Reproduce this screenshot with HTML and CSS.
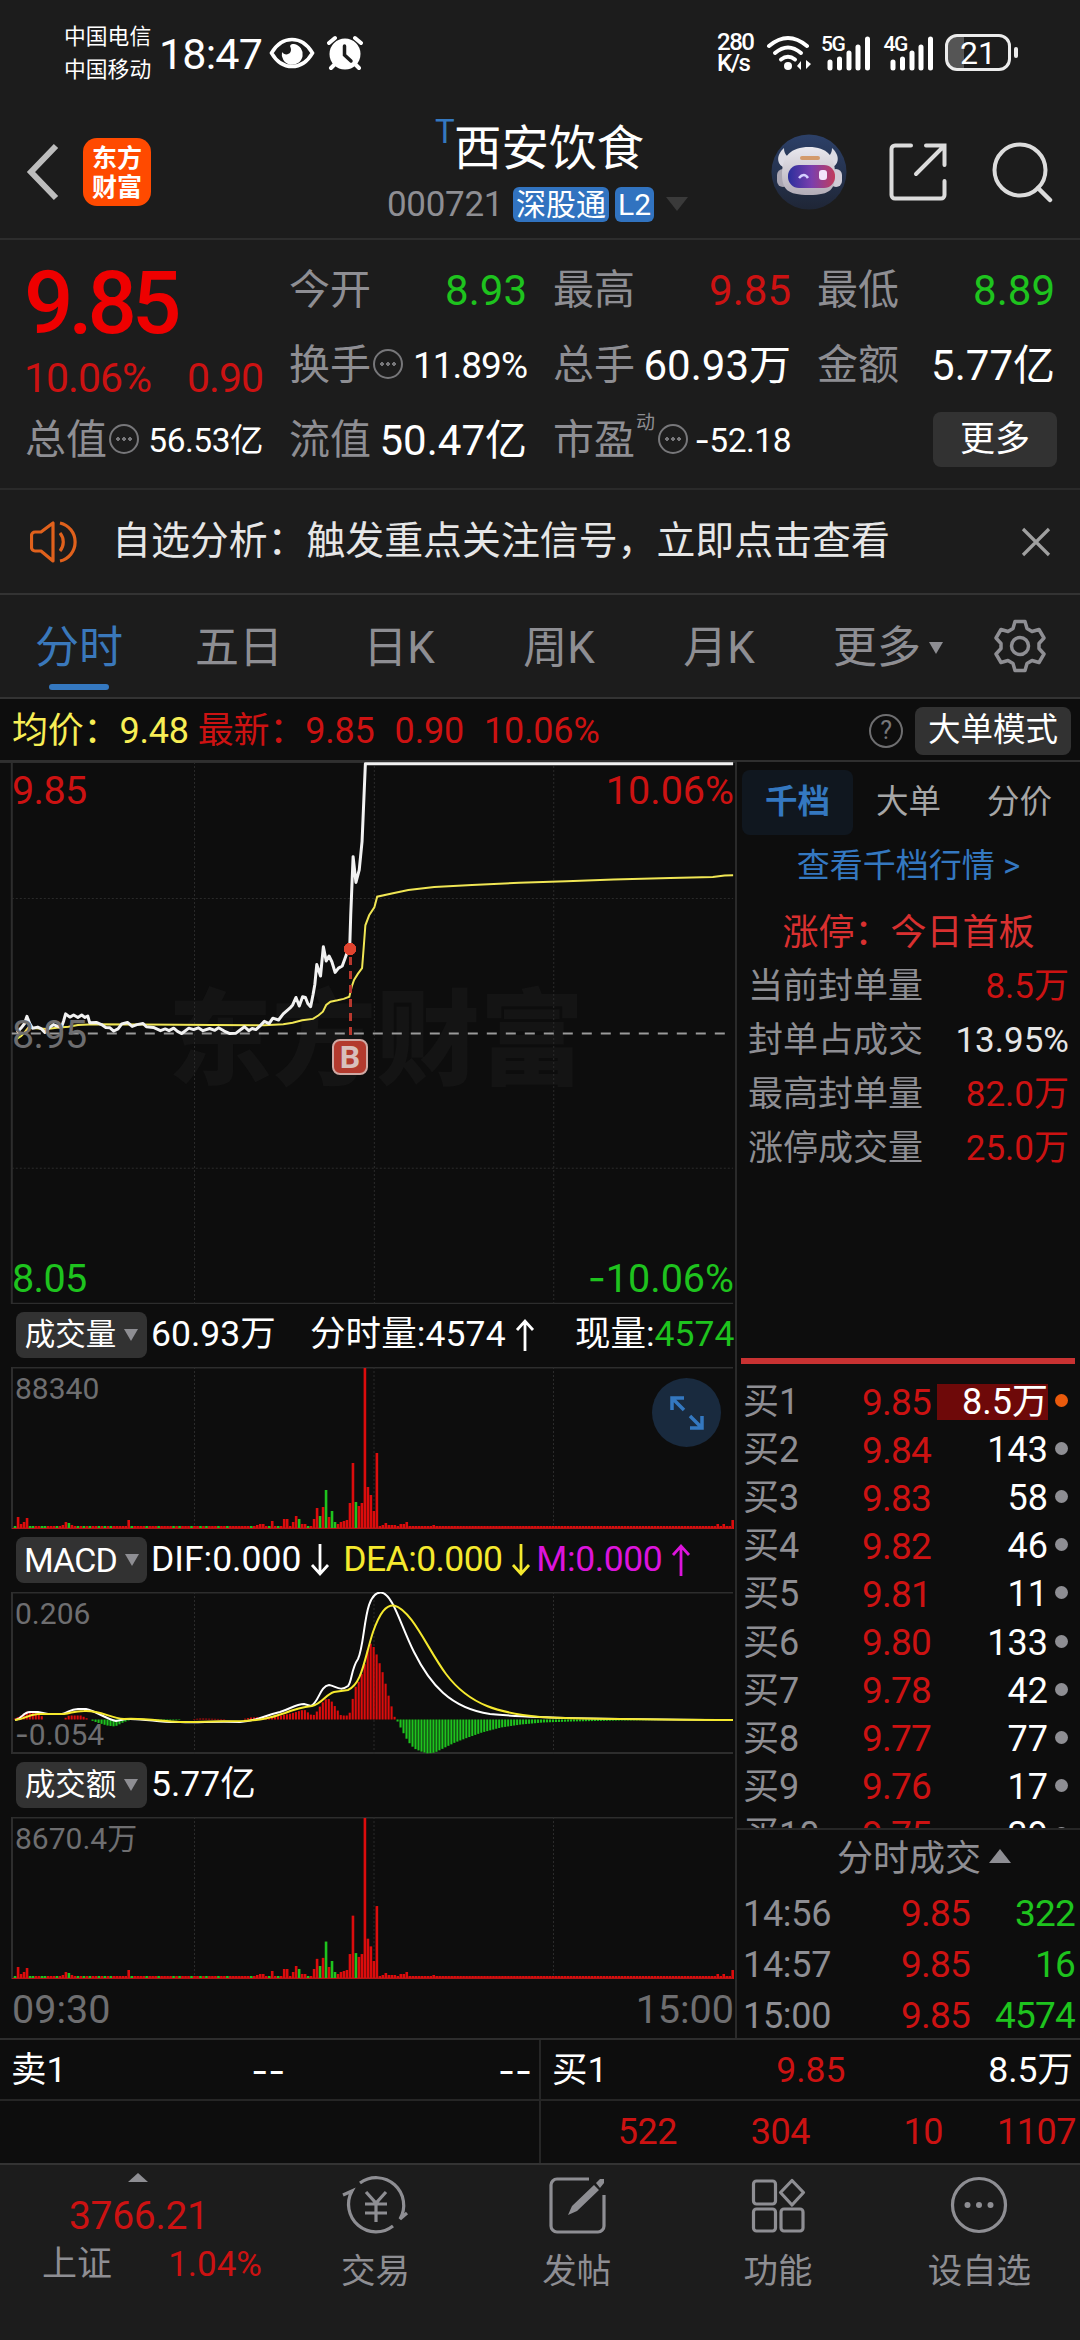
FILE: index.html
```html
<!DOCTYPE html>
<html lang="zh-CN">
<head>
  <meta charset="UTF-8" />
  <title>西安饮食 000721</title>
  <link rel="stylesheet" href="styles.css">
</head>
<body>
  <div class="statusbar">
    <div class="carrier"><span>中国电信</span><span>中国移动</span></div>
    <span class="clock">18:47</span>
    <svg class="ic-eye" width="46" height="34" viewBox="0 0 46 34"><path d="M2.500 17C13-1 33-1 43.500 17C33 35 13 35 2.500 17z" fill="none" stroke="#fff" stroke-width="3.500"/><path d="M25 8a10.500 10.500 0 1 1-12 8c3 5 12 2 8-6c1-2 2-2 4-2z" fill="#fff"/></svg>
    <svg class="ic-alarm" width="36" height="36" viewBox="0 0 36 36"><circle cx="18" cy="19" r="15.500" fill="#fff"/><path d="M2 8l6-5M34 8l-6-5M8 29l-4 4M28 29l4 4" stroke="#fff" stroke-width="4" stroke-linecap="round"/><path d="M17.500 11v9l6.500 6" fill="none" stroke="#1c1c1c" stroke-width="3.500" stroke-linecap="round"/></svg>
    <div class="status-right">
      <div class="speed"><span>280</span><span>K/s</span></div>
      <svg class="ic-wifi" width="46" height="36" viewBox="0 0 46 36"><g fill="none" stroke="#fff" stroke-width="4" stroke-linecap="round"><path d="M3 11Q22-5 41 11"/><path d="M9 18Q22 7 35 18"/><path d="M15 24.500Q22 19 29 24.500"/></g><circle cx="22" cy="31" r="4" fill="#fff"/><path d="M31 31l4-5v9zM45 29l-5-4v9z" fill="#fff"/></svg>
      <div class="signal"><span>5G</span><svg width="52" height="36" viewBox="0 0 52 36"><path d="M9 27v6M18.500 24v9M28 18v15M37 12v21M46.500 4v29" stroke="#fff" stroke-width="5" stroke-linecap="round"/></svg></div>
      <div class="signal"><span>4G</span><svg width="52" height="36" viewBox="0 0 52 36"><path d="M9 27v6M18.500 24v9M28 18v15M37 12v21M46.500 4v29" stroke="#fff" stroke-width="5" stroke-linecap="round"/></svg></div>
      <div class="battery">21</div>
    </div>
  </div>

  <header class="topbar">
    <svg class="back" width="34" height="58" viewBox="0 0 34 58"><path d="M30 3L5 29l25 26" fill="none" stroke="#bdbdbd" stroke-width="6"/></svg>
    <div class="logo">东方<br>财富</div>
    <div class="title">
      <div class="name"><sup>T</sup>西安饮食</div>
      <div class="code"><span>000721</span><b>深股通</b><b>L2</b><i class="tri tri-dark"></i></div>
    </div>
    <svg class="robot" width="76" height="76" viewBox="0 0 76 76">
      <defs>
        <linearGradient id="sky" x1="0" y1="0" x2="0" y2="1"><stop offset="0" stop-color="#2c4068"/><stop offset="1" stop-color="#1f2636"/></linearGradient>
        <linearGradient id="visor"><stop offset="0" stop-color="#2b2f9c"/><stop offset=".5" stop-color="#7a3fae"/><stop offset="1" stop-color="#c23d5c"/></linearGradient>
        <linearGradient id="shell" x1="0" y1="0" x2="0" y2="1"><stop offset="0" stop-color="#e9e8ee"/><stop offset="1" stop-color="#b3adb8"/></linearGradient>
      </defs>
      <circle cx="38" cy="38" r="37.500" fill="url(#sky)"/>
      <path d="M13 14c-9 8-7 18 2 20l8-11c-6 1-10-2-10-9zM61 14c9 8 7 18-2 20l-8-11c6 1 10-2 10-9z" fill="#dcdbe4"/>
      <rect x="6" y="35" width="12" height="18" rx="6" fill="#aaa6b2"/><rect x="59" y="35" width="12" height="18" rx="6" fill="#d0ccd6"/>
      <path d="M38 13c18 0 26 9 26 27c0 15-4 21-26 21s-27-6-27-21c0-18 9-27 27-27z" fill="url(#shell)"/>
      <rect x="29" y="22" width="20" height="4" rx="2" fill="#d39a6b"/>
      <rect x="17" y="31" width="47" height="23" rx="11" fill="url(#visor)"/>
      <path d="M28 44q5-6 9 0" fill="none" stroke="#d5d0ff" stroke-width="2.500"/><rect x="48" y="36" width="8" height="10" rx="3" fill="#f3e5fb"/>
    </svg>
    <svg class="share" width="58" height="58" viewBox="0 0 58 58"><path d="M22 2.500H6a3.500 3.500 0 0 0-3.500 3.500v46A3.500 3.500 0 0 0 6 55.500h46a3.500 3.500 0 0 0 3.500-3.500V38M37 2.500h18.500V22M55 3L27 31" fill="none" stroke="#dcdcdc" stroke-width="4" stroke-linecap="round"/></svg>
    <svg class="search" width="62" height="62" viewBox="0 0 62 62"><circle cx="28" cy="29" r="25.500" fill="none" stroke="#dcdcdc" stroke-width="4"/><path d="M46 47l12 12" stroke="#dcdcdc" stroke-width="4.500" stroke-linecap="round"/></svg>
  </header>

  <section class="quote">
    <div class="price">
      <div class="last">9.85</div>
      <div class="chg"><span>10.06%</span><span>0.90</span></div>
    </div>
    <div class="cell"><span>今开</span><em class="green">8.93</em></div>
    <div class="cell"><span>最高</span><em class="red">9.85</em></div>
    <div class="cell"><span>最低</span><em class="green">8.89</em></div>
    <div class="cell"><span>换手</span><i class="more-dot"></i><em class="md">11.89%</em></div>
    <div class="cell"><span>总手</span><em>60.93万</em></div>
    <div class="cell"><span>金额</span><em>5.77亿</em></div>
    <div class="cell"><span>总值</span><i class="more-dot"></i><em class="sm">56.53亿</em></div>
    <div class="cell"><span>流值</span><em>50.47亿</em></div>
    <div class="cell"><span>市盈</span><sup>动</sup><i class="more-dot"></i><em class="sm"><i class="neg">-</i>52.18</em></div>
    <div class="cell"><button class="btn-more">更多</button></div>
  </section>

  <section class="notice">
    <svg width="52" height="44" viewBox="0 0 52 44"><g fill="none" stroke="#e0611c" stroke-width="3.200"><path d="M23 3v38L11 31H5a3.500 3.500 0 0 1-3.500-3.500v-12A3.500 3.500 0 0 1 5 12h6z" stroke-linejoin="round"/><path d="M30 13a14 14 0 0 1 0 18M30 3a19.500 19.500 0 0 1 0 38"/></g></svg>
    <p>自选分析：触发重点关注信号，立即点击查看</p>
    <svg width="30" height="30" viewBox="0 0 30 30"><path d="M2 2l26 26M28 2L2 28" stroke="#a0a0a0" stroke-width="3.200"/></svg>
  </section>

  <nav class="tabs">
    <a class="active">分时</a><a>五日</a><a>日K</a><a>周K</a><a>月K</a><a class="wide">更多<i class="tri"></i></a>
    <svg width="52" height="54" viewBox="0 0 52 54"><path d="M21 2.500h10l2 7 5 3 7-2 5 8.500-5 5.500v5l5 5.500-5 8.500-7-2-5 3-2 7H21l-2-7-5-3-7 2-5-8.500 5-5.500v-5l-5-5.500L7 10.500l7 2 5-3z" fill="none" stroke="#8e8e93" stroke-width="3.500" stroke-linejoin="round"/><circle cx="26" cy="27" r="8.500" fill="none" stroke="#8e8e93" stroke-width="3.500"/></svg>
  </nav>

  <div class="legend">
    <span class="avg">均价：9.48</span>
    <span class="cur">最新：9.85</span><span class="cur">0.90</span><span class="cur">10.06%</span>
    <i class="help">?</i>
    <button>大单模式</button>
  </div>

  <main>
    <div class="charts">
      <div class="pane pane-price">
        <div class="watermark">东方财富</div>
        <svg viewBox="0 33 1557 1517" preserveAspectRatio="none">
          <g class="grid"><path class="frame" d="M25 33V1549H1553M0 33H1557"/><path d="M412 33V1549M793 33V1549M1173 33V1549M25 415H1553M25 1170H1553"/></g>
          <path class="base-line" d="M25 793H1553"/>
          <polyline class="avg-line" points="33,810 45,800 52,790 60,776 75,778 100,780 120,777 145,774 165,769 200,767 300,768 450,769 560,770 600,767 620,763 640,756 663,752 675,742 684,732 691,713 700,704 715,700 728,696 740,690 745,662 750,643 758,626 767,610 770,560 774,490 782,462 793,440 799,410 830,401 865,391 920,383 1000,377 1100,371 1200,367 1300,362 1420,358 1510,355 1535,351 1553,350"/>
          <polyline class="price-line" points="36,790 45,777 52,765 57,745 63,765 69,778 80,775 87,779 95,790 103,778 113,768 121,772 130,776 135,757 139,738 148,747 156,741 165,748 173,741 180,748 186,744 190,763 204,762 215,768 224,776 233,777 241,786 250,780 258,766 270,762 280,773 290,768 303,765 310,774 325,776 340,785 350,780 358,785 368,778 376,787 385,793 400,778 410,782 420,777 430,785 444,779 455,784 463,777 475,786 487,793 500,792 508,784 518,774 527,785 534,779 542,782 552,770 560,759 570,765 578,750 590,755 600,738 614,722 620,713 627,692 634,716 641,690 647,692 652,709 658,718 663,685 667,655 671,600 679,632 685,550 691,590 697,576 703,592 710,622 717,610 725,604 731,582 741,545 743,460 748,298 754,370 761,335 767,255 774,38 1553,38"/>
        </svg>
        <span class="lab red tl">9.85</span><span class="lab red tr">10.06%</span>
        <span class="lab grey ml">8.95</span>
        <span class="lab green bl">8.05</span><span class="lab green br"><i class="neg">-</i>10.06%</span>
        <div class="buy"><i></i><b>B</b></div>
      </div>

      <div class="pane-head"><button>成交量<i class="tri"></i></button><span class="w1">60.93万</span><span class="w2">分时量:4574<svg class="arrow" viewBox="0 0 20 34"><path d="M10 33V3M2 12l8-9 8 9"/></svg></span><span class="now">现量:<em class="green">4574</em></span></div>
      <div class="pane pane-sub">
        <svg id="volume" viewBox="0 0 735 162"></svg>
        <span class="sublab top">88340</span>
        <div class="expand"><svg width="34" height="34" viewBox="0 0 34 34"><path d="M14 2H2v12M2 2l12 12M20 32h12V20M32 32L20 20" fill="none" stroke="#3478c0" stroke-width="3.500"/></svg></div>
      </div>

      <div class="pane-head"><button class="en">MACD<i class="tri"></i></button><span>DIF:0.000<svg class="arrow" viewBox="0 0 20 34"><path d="M10 1v30M2 22l8 9 8-9"/></svg></span><span class="yellow dea">DEA:0.000<svg class="arrow" viewBox="0 0 20 34"><path d="M10 1v30M2 22l8 9 8-9"/></svg></span><span class="pink">M:0.000<svg class="arrow" viewBox="0 0 20 34"><path d="M10 33V3M2 12l8-9 8 9"/></svg></span></div>
      <div class="pane pane-sub">
        <svg id="macd" viewBox="0 0 735 162"></svg>
        <span class="sublab top">0.206</span><span class="sublab bottom"><i class="neg">-</i>0.054</span>
      </div>

      <div class="pane-head"><button>成交额<i class="tri"></i></button><span>5.77亿</span></div>
      <div class="pane pane-sub">
        <svg id="amount" viewBox="0 0 735 162"></svg>
        <span class="sublab top">8670.4万</span>
      </div>
      <div class="axis"><span>09:30</span><span>15:00</span></div>
    </div>

    <aside>
      <div class="side-tabs"><a class="active">千档</a><a>大单</a><a>分价</a></div>
      <div class="link">查看千档行情 &gt;</div>
      <div class="limit">涨停：今日首板</div>
      <dl class="stats">
        <div><dt>当前封单量</dt><dd class="red">8.5万</dd></div>
        <div><dt>封单占成交</dt><dd>13.95%</dd></div>
        <div><dt>最高封单量</dt><dd class="red">82.0万</dd></div>
        <div><dt>涨停成交量</dt><dd class="red">25.0万</dd></div>
      </dl>
      <ul class="book">
        <li class="hot"><span>买1</span><em>9.85</em><b>8.5万</b><i></i></li>
        <li><span>买2</span><em>9.84</em><b>143</b><i></i></li>
        <li><span>买3</span><em>9.83</em><b>58</b><i></i></li>
        <li><span>买4</span><em>9.82</em><b>46</b><i></i></li>
        <li><span>买5</span><em>9.81</em><b>11</b><i></i></li>
        <li><span>买6</span><em>9.80</em><b>133</b><i></i></li>
        <li><span>买7</span><em>9.78</em><b>42</b><i></i></li>
        <li><span>买8</span><em>9.77</em><b>77</b><i></i></li>
        <li><span>买9</span><em>9.76</em><b>17</b><i></i></li>
        <li><span>买10</span><em>9.75</em><b>39</b><i></i></li>
      </ul>
      <div class="ticks-title">分时成交<i class="tri-up"></i></div>
      <ul class="ticks">
        <li><span>14:56</span><em>9.85</em><b>322</b></li>
        <li><span>14:57</span><em>9.85</em><b>16</b></li>
        <li><span>15:00</span><em>9.85</em><b>4574</b></li>
      </ul>
    </aside>
  </main>

  <section class="bidask">
    <div class="side"><span>卖1</span><span class="dash">--</span><span class="dash end">--</span></div>
    <div class="side"><span>买1</span><span class="red best">9.85</span><span>8.5万</span></div>
    <div class="queue"></div>
    <div class="queue"><span>522</span><span>304</span><span>10</span><span>1107</span></div>
  </section>

  <footer>
    <div class="index">
      <i class="tri-up"></i>
      <div class="idx-val">3766.21</div>
      <div class="idx-row"><span>上证</span><em class="red">1.04%</em></div>
    </div>
    <a><svg viewBox="0 0 66 60"><g fill="none" stroke="#8e8e93" stroke-width="3.200"><path d="M18 8A27.500 27.500 0 0 1 58 44l7-6M51 51A27.500 27.500 0 0 1 10 16l-9 4"/><path d="M24 17l10 11 10-11M34 28v19M23 29h22M23 38h22"/></g></svg>交易</a>
    <a><svg viewBox="0 0 66 60"><path d="M45 4H13a6 6 0 0 0-6 6v41a6 6 0 0 0 6 6h41a6 6 0 0 0 6-6V20" fill="none" stroke="#8e8e93" stroke-width="3.200"/><path d="M24 40l4-9 22-21 5 5-22 21zM52 8l4-4 4 0 0 4-4 5z" fill="#8e8e93"/></svg>发帖</a>
    <a><svg viewBox="0 0 66 60"><g fill="none" stroke="#8e8e93" stroke-width="3.200"><rect x="8.500" y="6" width="22" height="23" rx="3"/><rect x="8.500" y="34" width="22" height="22" rx="3"/><rect x="36" y="34" width="22" height="22" rx="3"/><path d="M47 5.500l11.500 12-11.500 12.500-11.500-12.500z" stroke-linejoin="round"/></g></svg>功能</a>
    <a><svg viewBox="0 0 66 60"><circle cx="33" cy="30" r="26.500" fill="none" stroke="#8e8e93" stroke-width="3.200"/><g fill="#8e8e93"><circle cx="21.500" cy="30" r="3"/><circle cx="33" cy="30" r="3"/><circle cx="44.500" cy="30" r="3"/></g></svg>设自选</a>
  </footer>

  <script src="script.js"></script>
</body>
</html>
```
FILE: styles.css
```css
* {
  margin: 0;
  padding: 0;
  box-sizing: border-box;
}

body {
  width: 1080px;
  height: 2340px;
  overflow: hidden;
  background: #1c1c1c;
  color: #fff;
  font-family: Roboto, "Noto Sans CJK SC", sans-serif;
  font-size: 36px;
  line-height: 1;
  display: flex;
  flex-direction: column;
}

em, i, b {
  font-style: normal;
  font-weight: 400;
}

ul {
  list-style: none;
}

svg {
  display: block;
  flex: none;
}

button {
  border: none;
  color: #fff;
  background: #323232;
  border-radius: 8px;
  font-family: inherit;
  line-height: 1;
}

.red { color: #cc1212; }
.green { color: #1ec31e; }
.yellow { color: #f5e92e; }
.pink { color: #dc14dc; }
.grey { color: #6e6e70; }

/* wider minus sign */
.neg, .dash {
  font-family: Inter, sans-serif;
}

.tri {
  display: inline-block;
  border: 7px solid transparent;
  border-top: 12px solid #8e8e93;
  border-bottom: 0;
}

.tri-up {
  display: block;
  border: 10px solid transparent;
  border-bottom: 13px solid #8e8e93;
  border-top: 0;
}

/* status bar */
.statusbar {
  height: 105px;
  padding: 0 69px 0 64px;
  display: flex;
  align-items: center;
}

.carrier, .speed {
  display: flex;
  flex-direction: column;
}

.carrier {
  width: 95px;
  font-size: 21.8px;
  line-height: 33px;
  padding-top: 1px;
}

.clock {
  width: 110px;
  font-size: 43px;
  letter-spacing: -.8px;
  margin-top: 3px;
}

.ic-eye { margin-right: 12px; }

.status-right {
  margin-left: auto;
  display: flex;
  align-items: center;
}

.speed {
  width: 49px;
  font-size: 24px;
  line-height: 21px;
  font-weight: 500;
  letter-spacing: -1.500px;
}

.ic-wifi { margin-right: 8px; }

.signal {
  position: relative;
  width: 62.500px;
  padding-left: 1px;
}

.signal span {
  position: absolute;
  left: 1px;
  top: -1px;
  font-size: 21px;
  font-weight: 500;
  letter-spacing: -1.500px;
}

.battery {
  position: relative;
  width: 66px;
  height: 37px;
  border: 3px solid #ececec;
  border-radius: 12px;
  background: linear-gradient(to right, #555 27%, transparent 27%);
  font-size: 32px;
  line-height: 32px;
  text-align: center;
}

.battery::after {
  content: "";
  position: absolute;
  right: -10px;
  top: 10px;
  width: 4px;
  height: 11px;
  border-radius: 2px;
  background: #ececec;
}

/* title bar */
.topbar {
  height: 135px;
  padding: 0 26px 0 26px;
  border-bottom: 2px solid #2d2d2d;
  display: flex;
  align-items: center;
}

.logo {
  width: 68px;
  height: 68px;
  margin-left: 23px;
  border-radius: 14px;
  background: #ff4a00;
  font-family: "Noto Sans CJK SC", sans-serif;
  font-weight: 700;
  font-size: 25px;
  line-height: 29px;
  padding-top: 4px;
  text-align: center;
}

.title {
  width: 320px;
  margin: 0 0 0 222px;
}

.name {
  height: 65px;
  padding-left: 62px;
  display: flex;
  font-size: 47.500px;
  line-height: 54px;
  white-space: nowrap;
}

.name sup {
  width: 19px;
  font-size: 33px;
  line-height: 48px;
  margin-top: -14px;
  color: #3478c0;
}

.code {
  padding-left: 14px;
  display: flex;
  align-items: center;
  gap: 6px;
  color: #8e8e93;
  white-space: nowrap;
}

.code span {
  width: 120px;
  font-size: 35px;
  letter-spacing: -.3px;
}

.code b {
  height: 35px;
  padding: 0 3px;
  border-radius: 6px;
  background: #3173c0;
  color: #fff;
  font-size: 30px;
  line-height: 35px;
}

.tri-dark {
  margin-left: 6px;
  border-width: 14px 11px 0;
  border-top-color: #3a3a3a;
}

.robot { margin-left: 78px; }
.share { margin-left: 42px; }
.search { margin-left: 45px; }

/* quote summary */
.quote {
  height: 250px;
  padding: 13px 25px 0 26px;
  border-bottom: 2px solid #2a2a2a;
  display: grid;
  grid-template-columns: repeat(4, 237px);
  grid-template-rows: repeat(3, 75px);
  column-gap: 27px;
}

.price {
  grid-row: span 2;
}

.last {
  margin-left: -2px;
  font-size: 87px;
  font-weight: 500;
  line-height: 100px;
  letter-spacing: -5px;
  color: #ee0000;
}

.chg {
  display: flex;
  justify-content: space-between;
  font-size: 41px;
  line-height: 51px;
  letter-spacing: -1px;
  color: #cc1212;
}

.chg span:first-child { margin-left: -2px; }

.cell {
  display: flex;
  align-items: center;
  white-space: nowrap;
}

.cell span {
  margin-left: -1px;
  color: #8e8e93;
  font-size: 41px;
}

.cell sup {
  width: 20px;
  font-size: 19px;
  margin: -36px 0 0 1px;
  color: #8e8e93;
}

.cell em {
  margin-left: auto;
  font-size: 42px;
}

.cell .md { font-size: 37px; letter-spacing: -1px; }
.cell .sm { font-size: 33.500px; letter-spacing: -.5px; }

.more-dot {
  width: 30px;
  height: 30px;
  margin: -3px 0 0 2px;
  border: 2px solid #77777a;
  border-radius: 50%;
  background:
    radial-gradient(circle 2px, #77777a 99%, transparent) -6px 0 no-repeat,
    radial-gradient(circle 2px, #77777a 99%, transparent) 0 0 no-repeat,
    radial-gradient(circle 2px, #77777a 99%, transparent) 6px 0 no-repeat;
}

.btn-more {
  width: 124px;
  height: 55px;
  margin: -3px -2px 0 auto;
  font-size: 35px;
}

/* notice */
.notice {
  height: 105px;
  padding: 0 29px 0 30px;
  border-bottom: 2px solid #333;
  display: flex;
  align-items: center;
}

.notice p {
  flex: 1;
  margin-left: 30px;
  font-size: 38.900px;
  color: #e6e6e6;
}

/* period tabs */
.tabs {
  height: 104px;
  padding-top: 3px;
  border-bottom: 2px solid #333;
  display: flex;
  align-items: center;
  color: #8e8e93;
  font-size: 44px;
}

.tabs a {
  position: relative;
  width: 160px;
  left: -1px;
  text-align: center;
}

.tabs .wide {
  width: 178px;
}

.tabs .wide .tri {
  margin-left: 8px;
  vertical-align: 9px;
}

.tabs .active {
  color: #3a78bb;
}

.tabs .active::after {
  content: "";
  position: absolute;
  left: 50px;
  bottom: -20px;
  width: 60px;
  height: 6px;
  border-radius: 3px;
  background: #3478c0;
}

.tabs svg { margin: -3px 0 0 16px; }

/* chart legend */
.legend {
  height: 63px;
  padding: 2px 9px 0 12px;
  background: #0d0d0d;
  border-bottom: 2px solid #2f2f2f;
  display: flex;
  align-items: center;
  font-size: 36px;
  letter-spacing: -.2px;
}

.avg { color: #f7ee55; margin-right: 9px; }
.cur { color: #cc1212; margin-right: 20px; }

.help {
  width: 34px;
  height: 34px;
  margin-left: auto;
  border: 2.500px solid #6e6e70;
  border-radius: 50%;
  color: #77777a;
  font-size: 25px;
  line-height: 30px;
  text-align: center;
}

.legend button {
  width: 156px;
  height: 48px;
  margin-left: 12px;
  font-size: 32.500px;
}

/* main area */
main {
  height: 1278px;
  background: #0d0d0d;
  border-bottom: 2px solid #2d2d2d;
  display: flex;
}

.charts {
  width: 735px;
}

.pane {
  position: relative;
}

.pane > svg {
  width: 735px;
  height: 100%;
}

.pane-price {
  height: 542px;
}

.pane-sub {
  height: 162px;
}

.grid path, .gridline {
  fill: none;
  stroke: #2b2b2b;
  stroke-width: 1;
  stroke-dasharray: 2 2;
  vector-effect: non-scaling-stroke;
}

.grid .frame, .frame {
  fill: none;
  stroke: #2d2d2d;
  stroke-width: 2;
  stroke-dasharray: none;
}

.base-line, .avg-line, .price-line {
  fill: none;
  vector-effect: non-scaling-stroke;
}

.base-line {
  stroke: #9a9a9a;
  stroke-width: 2;
  stroke-dasharray: 10 9;
}

.avg-line { stroke: #f0e654; stroke-width: 2; }
.price-line { stroke: #f2f2f2; stroke-width: 3; stroke-linejoin: round; }

.watermark {
  position: absolute;
  left: 168px;
  top: 216px;
  font-family: "Noto Sans CJK SC", sans-serif;
  font-size: 104px;
  font-weight: 900;
  line-height: 108px;
  color: #141414;
}

.pane-price > svg {
  position: relative;
}

.lab, .sublab {
  position: absolute;
  line-height: 40px;
}

.lab { font-size: 39.500px; letter-spacing: -.6px; }
.tl, .tr { top: 9px; }
.ml { top: 253px; }
.bl, .br { bottom: 5px; }
.tl, .ml, .bl { left: 12px; }
.tr, .br { right: 1px; letter-spacing: 0; }

.buy {
  position: absolute;
  left: 332px;
  top: 181px;
  width: 36px;
  display: flex;
  flex-direction: column;
  align-items: center;
}

.buy i {
  width: 12px;
  height: 96px;
  background:
    radial-gradient(circle at 6px 6px, #e0442f 6px, transparent 6.500px),
    repeating-linear-gradient(to bottom, #b8382e 0 8px, transparent 8px 14px) 4.500px 0 / 3px 100% no-repeat;
}

.buy b {
  width: 36px;
  height: 36px;
  border: 2px solid #cfa9a4;
  border-radius: 8px;
  background: #b33a2e;
  color: #d8bfbc;
  font-size: 32px;
  font-weight: 700;
  line-height: 33px;
  text-align: center;
}

.pane-head {
  height: 63px;
  padding: 0 0 1px 16px;
  display: flex;
  align-items: center;
  gap: 4px;
  font-size: 35.500px;
  white-space: nowrap;
}

.pane-head button {
  flex: none;
  width: 131px;
  height: 46px;
  font-size: 30.500px;
  display: flex;
  align-items: center;
  justify-content: center;
  gap: 8px;
}

.pane-head .en {
  font-size: 34px;
  letter-spacing: -.8px;
}

.pane-head span {
  flex: none;
  display: flex;
  align-items: center;
  margin-right: 9px;
}

.pane-head .w1 { width: 146px; }
.pane-head .w2 { width: 252px; letter-spacing: .1px; }
.pane-head .now { margin-right: 0; }
.pane-head .dea { margin-right: 1px; letter-spacing: -.6px; }
.pane-head .pink { letter-spacing: -.4px; }

.arrow {
  width: 20px;
  height: 34px;
  margin-left: 9px;
  fill: none;
  stroke: currentColor;
  stroke-width: 2.800;
}

.sublab {
  left: 15px;
  font-size: 30px;
  color: #6e6e70;
}

.top { top: 2px; }
.bottom { bottom: -1px; }

.expand {
  position: absolute;
  right: 14px;
  top: 11px;
  width: 69px;
  height: 69px;
  border-radius: 50%;
  background: #192a3e;
  display: flex;
  align-items: center;
  justify-content: center;
}

.axis {
  padding: 11px 1px 0 12px;
  display: flex;
  justify-content: space-between;
  font-size: 39.500px;
  line-height: 40px;
  color: #6e6e70;
}

/* order book column */
aside {
  width: 345px;
  border-left: 2px solid #2a2a2a;
  color: #8e8e93;
}

.side-tabs {
  padding: 8px 5px 0;
  display: flex;
  font-size: 32.500px;
  line-height: 65px;
  text-align: center;
  color: #a6a6a6;
}

.side-tabs a {
  flex: 1;
}

.side-tabs .active {
  border-radius: 8px;
  background: #10171f;
  color: #3478c0;
  font-weight: 700;
}

.link {
  height: 66px;
  text-align: center;
  font-size: 33px;
  line-height: 62px;
  color: #3478c0;
}

.limit {
  height: 58px;
  text-align: center;
  font-size: 36px;
  line-height: 64px;
  color: #d93030;
}

.stats {
  height: 405px;
  margin: 0 5px 0 4px;
  border-bottom: 6px solid #c83232;
}

.stats div {
  height: 54px;
  padding: 0 6px 0 7px;
  display: flex;
  align-items: center;
  justify-content: space-between;
  font-size: 35px;
}

.stats dd:not(.red) { color: #e6e6e6; }

.book {
  height: 466px;
  padding-top: 14px;
  border-bottom: 2px solid #262626;
  overflow: hidden;
}

.book li {
  height: 48.100px;
  padding-left: 6px;
  display: flex;
  align-items: center;
}

.book span { width: 119px; }

.book em, .ticks em {
  width: 75px;
  font-size: 37px;
  color: #cc1212;
  letter-spacing: -.8px;
}

.book b {
  width: 111px;
  height: 36px;
  line-height: 37px;
  text-align: right;
  color: #fff;
}

.book i {
  width: 13px;
  height: 13px;
  margin: -3px 0 0 7px;
  border-radius: 50%;
  background: #8e8e93;
}

.hot b { background: #6e0909; }
.book .hot i { background: #ea5a0c; }

.ticks-title {
  height: 58px;
  padding-left: 100px;
  display: flex;
  align-items: center;
  gap: 8px;
}

.ticks-title .tri-up {
  margin-top: -6px;
  border-width: 0 11px 14px;
}

.ticks li {
  height: 51.200px;
  padding: 0 5px 0 6px;
  display: flex;
  align-items: center;
}

.ticks span {
  width: 158px;
  letter-spacing: -.3px;
}

.ticks b {
  margin-left: auto;
  color: #1ec31e;
  font-size: 37px;
  letter-spacing: -.8px;
}

/* best bid and ask */
.bidask {
  height: 125px;
  background: #0d0d0d;
  border-bottom: 2px solid #333;
  display: grid;
  grid-template-columns: 541px 539px;
  grid-template-rows: 61px 62px;
}

.side, .queue {
  display: flex;
  align-items: center;
  border-right: 2px solid #262626;
}

.side:nth-child(even), .queue:nth-child(even) {
  border-right: none;
}

.side {
  padding: 2px 7px 0 11px;
  justify-content: space-between;
  border-bottom: 2px solid #262626;
  font-size: 35.500px;
}

.dash {
  margin-left: -28px;
  font-size: 37px;
}

.end { margin-left: 0; }
.best { margin-left: 26px; }

.queue {
  padding-right: 4px;
  justify-content: flex-end;
  color: #cc1212;
}

.queue span {
  width: 133px;
  text-align: right;
  letter-spacing: -.5px;
}

/* bottom bar */
footer {
  flex: 1;
  display: flex;
  color: #8e8e93;
}

.index {
  width: 275px;
  padding: 8px 0 0 42px;
}

.index .tri-up {
  width: 20px;
  margin-left: 86px;
  border-bottom-width: 9px;
}

.idx-val {
  padding-left: 27px;
  margin-top: 13px;
  font-size: 39px;
  line-height: 42px;
  letter-spacing: -.3px;
  color: #cc1212;
}

.idx-row {
  width: 220px;
  padding-top: 1px;
  display: flex;
  justify-content: space-between;
  font-size: 35px;
  line-height: 54px;
}

footer a {
  width: 201.500px;
  padding-top: 10px;
  display: flex;
  flex-direction: column;
  align-items: center;
  font-size: 34.500px;
  line-height: 72px;
}

footer a svg {
  width: 66px;
  height: 60px;
  overflow: visible;
}
```
FILE: script.js
```js
const LEFT = 10.8;
const HEIGHT = 162;
const STEP = 2.99;

const RED = "#dc0c0c";
const GREEN = "#1ec31e";

function frame() {
  let s = `<path class="frame" d="M12 0V161H733M12 0.5H733"/>`;
  [194.5, 374, 553.5].forEach(x => {
    s += `<path class="gridline" d="M${x} 0V162"/>`;
  });
  return s;
}

// minute index -> bar height, minutes not listed stay at 3px
const volume = {
  2: 12, 3: 5, 4: 7, 5: 11, 17: 4, 18: 7, 19: 6, 20: 4, 39: 9,
  82: 4, 83: 5, 84: 5, 87: 8, 91: 10, 92: 10, 94: 7, 95: 13, 96: 10, 97: 5, 98: 5,
  101: 10, 102: 21, 103: 13, 104: 22, 105: 39, 106: 12, 107: 18, 108: 7, 109: 5,
  110: 7, 111: 8, 112: 9, 113: 26, 114: 66, 115: 27, 116: 23, 117: 26, 118: 161,
  119: 42, 120: 34, 121: 18, 122: 76, 124: 4, 125: 6, 126: 4, 127: 4, 128: 4,
  130: 5, 131: 5, 132: 7, 141: 4, 236: 5, 238: 5, 241: 9
};
const down = [1, 6, 7, 10, 11, 15, 19, 22, 24, 26, 29, 31, 33, 40, 45, 49, 54, 56, 60,
  63, 65, 69, 72, 80, 86, 89, 96, 99, 103, 105, 107, 108, 115];

function drawBars(id, scale) {
  let s = frame();
  for (let i = 1; i <= 241; i++) {
    let h = volume[i] || 3;
    if (h > 20 && h < 160) h = h * scale;
    s += `<rect x="${LEFT + i * STEP}" y="${HEIGHT - h}" width="2.6" height="${h}" fill="${down.includes(i) ? GREEN : RED}"/>`;
  }
  s += `<path d="M12 161.5H733" stroke="#b41414"/>`;
  document.getElementById(id).innerHTML = s;
}

// [x, value] keypoints of the histogram, zero at y = 127.5
const hist = [
  [12, 0], [20, 4], [26, 8], [38, 6], [44, 0], [62, 0], [68, 4], [80, 4], [88, 0],
  [96, -3], [106, -6], [114, -7], [122, -3], [130, 0], [170, -1], [186, 0], [200, 1],
  [240, 0], [250, 2], [275, 3], [290, 6], [303, 10], [311, 4], [314, 5], [317, 10],
  [320, 15], [324, 20], [327, 21], [330, 19], [334, 13], [340, 4], [347, 4], [350, 9],
  [353, 30], [359, 40], [365, 60], [368, 77], [372, 74], [376, 64], [382, 46],
  [388, 22], [394, 1], [396, -1], [401, -11], [407, -22], [413, -29], [420, -32],
  [427, -34], [434, -33], [444, -28], [454, -23], [467, -18], [481, -13], [500, -8],
  [520, -5], [542, -3], [570, -2], [620, -1], [733, 0]
];

function valueAt(x) {
  for (let k = 1; k < hist.length; k++) {
    const [x0, v0] = hist[k - 1];
    const [x1, v1] = hist[k];
    if (x <= x1) return v0 + (v1 - v0) * (x - x0) / (x1 - x0);
  }
  return 0;
}

function drawMacd() {
  const zero = 127.5;
  let s = frame();
  for (let i = 1; i <= 240; i++) {
    const x = LEFT + i * STEP;
    const v = valueAt(x);
    if (Math.abs(v) < 0.4) continue;
    s += `<rect x="${x}" y="${v > 0 ? zero - v : zero}" width="2.1" height="${Math.abs(v)}" fill="${v > 0 ? RED : GREEN}"/>`;
  }
  s += `<path fill="none" stroke="#fff" stroke-width="2" d="M15 128C22 127 23 120 30 120H38L48 122H62C68 121 70 117 78 117H86C96 119 106 127 116 129L126 127C145 126 160 131 180 130C200 131 210 129 240 130C258 129 262 124 280 120C290 117 296 112 304 112L311 114C319 110 320 94 329 93C336 94 340 100 348 94C352 90 351 77 358 67C366 50 363 0 381 0.500C393 2 400 32 414 60C430 92 450 116 490 122C530 126 600 127 733 128"/>`;
  // DEA
  s += `<path fill="none" stroke="#f5e92e" stroke-width="2" d="M15 128C25 127 27 123 38 122H64C72 121 74 119 84 119C100 118 110 126 124 127C145 126 160 129 180 130C205 130 220 129 244 129C262 128 270 126 285 121C295 117 303 115 312 114C322 112 326 102 334 100L348 98C362 92 364 68 373 40C380 20 386 13 394 13.500C412 18 428 58 446 82C470 114 500 121 540 125C580 127.500 620 127 733 128"/>`;
  document.getElementById("macd").innerHTML = s;
}

drawBars("volume", 1);
drawBars("amount", 0.96);
drawMacd();
```
